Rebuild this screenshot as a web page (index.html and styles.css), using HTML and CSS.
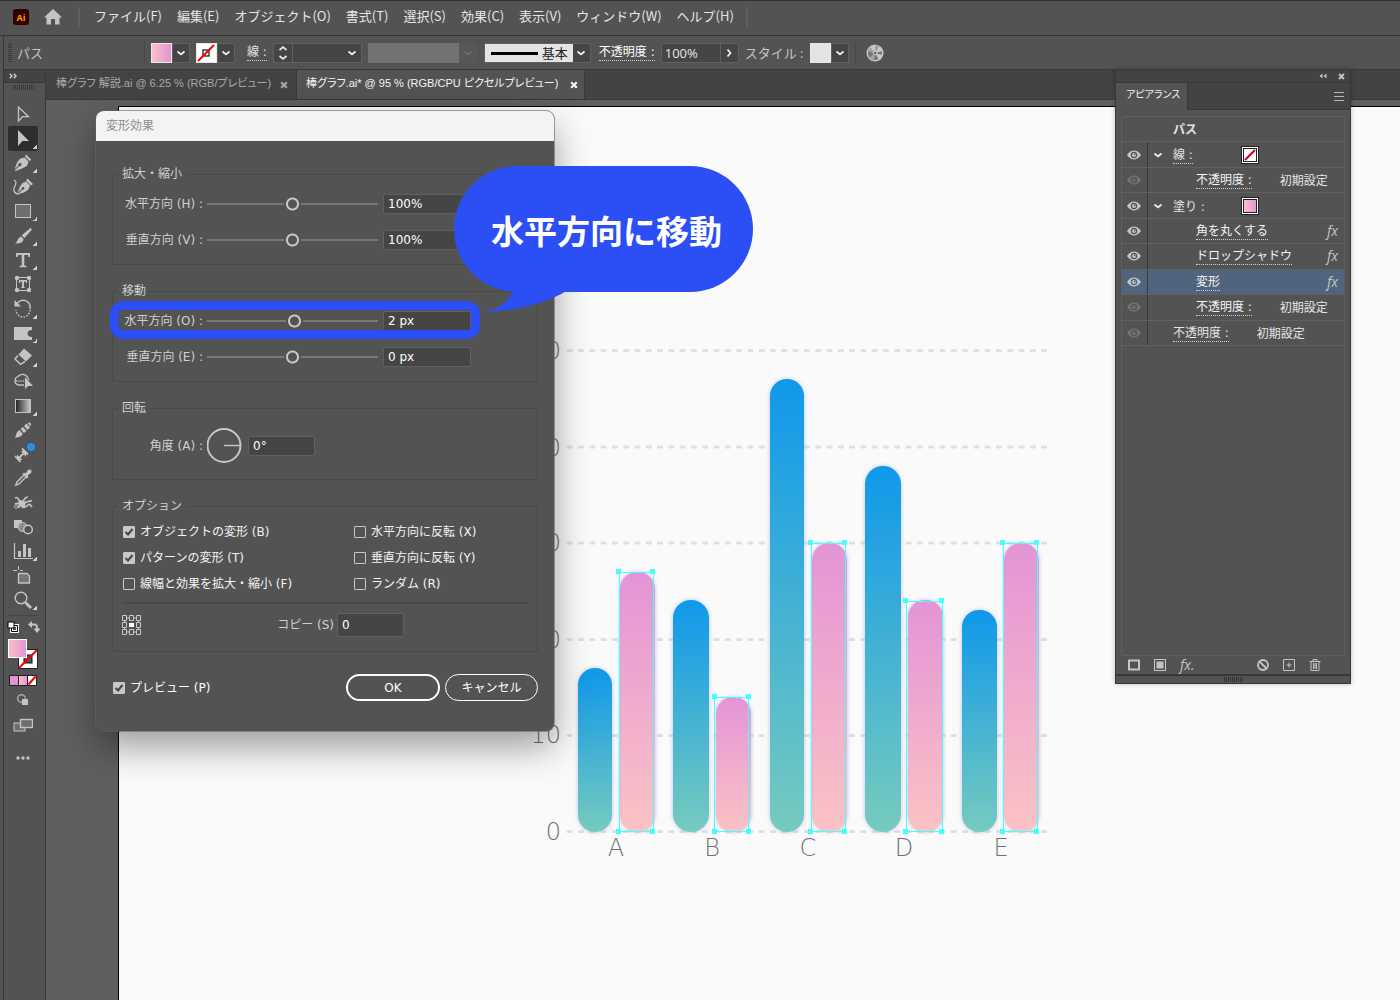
FILE: index.html
```html
<!DOCTYPE html>
<html lang="ja">
<head>
<meta charset="utf-8">
<title>棒グラフ.ai</title>
<link rel="stylesheet" href="styles.css">
</head>
<body>
<svg class="defs" aria-hidden="true">
  <symbol id="eye" viewBox="0 0 14 10"><path fill="currentColor" fill-rule="evenodd" d="M0 5C2 2 4.500 .6 7 .6S12 2 14 5C12 8 9.500 9.400 7 9.400S2 8 0 5ZM7 1.800A3.200 3.200 0 1 0 7 8.200A3.200 3.200 0 1 0 7 1.800Z"/><circle cx="7" cy="5" r="2" fill="currentColor"/><circle cx="7.600" cy="4.400" r=".8" fill="#535353"/></symbol>
  <symbol id="chev" viewBox="0 0 10 10"><path d="M1.500 3.500 5 6.500 8.500 3.500" fill="none" stroke="currentColor" stroke-width="1.700"/></symbol>
  <symbol id="close" viewBox="0 0 8 8"><path d="M1.200 1.200 6.800 6.800M6.800 1.200 1.200 6.800" stroke="currentColor" stroke-width="2.200"/></symbol>
  <symbol id="pen" viewBox="0 0 20 20"><path fill="currentColor" fill-rule="evenodd" d="M11.500 4.500 15.500 8.500 14 13 8 16 2.500 18 1.800 17.400 6.200 13A1.600 1.600 0 1 0 5.500 12.200L1.500 16.600 4 9.500 7 5.800ZM13 1.500 18.300 6.800 16.500 8 12 3.500Z"/></symbol>
</svg>

<div class="app">
  <nav class="menubar">
    <svg class="logo" viewBox="0 0 16 16" width="16" height="16"><rect width="16" height="16" rx="3" fill="#330000"/><text x="8" y="12" text-anchor="middle" class="logo-text">Ai</text></svg>
    <svg class="home" viewBox="0 0 20 18" width="20" height="18"><path fill="#c4c4c4" d="M10 1 19 9.500H16.500V16.500H12V11H8V16.500H3.500V9.500H1Z"/></svg>
    <span class="bar-sep"></span>
    <a href="#">ファイル(F)</a><a href="#">編集(E)</a><a href="#">オブジェクト(O)</a><a href="#">書式(T)</a><a href="#">選択(S)</a><a href="#">効果(C)</a><a href="#">表示(V)</a><a href="#">ウィンドウ(W)</a><a href="#">ヘルプ(H)</a>
    <span class="bar-sep"></span>
  </nav>

  <div class="controls">
    <span class="grip-v"></span>
    <span class="ctl-kind">パス</span>
    <span class="ctl-sep"></span>
    <button class="swatch-btn" aria-label="塗り"><span class="sw sw-pink"></span><span class="arrow"><svg width="10" height="10"><use href="#chev"/></svg></span></button>
    <button class="swatch-btn" aria-label="線"><span class="sw sw-none"><svg viewBox="0 0 18 18" width="18" height="18"><rect x="6" y="6" width="6" height="6" fill="none" stroke="#222" stroke-width="1.300"/><path d="M1 17 17 1" stroke="#f00008" stroke-width="2"/></svg></span><span class="arrow"><svg width="10" height="10"><use href="#chev"/></svg></span></button>
    <label class="dotted ctl-label" for="weight">線 :</label>
    <span class="combo weight">
      <button class="spin" aria-label="増減"><svg viewBox="0 0 10 16" width="10" height="16"><path d="M1.500 5 5 2 8.500 5M1.500 11 5 14 8.500 11" fill="none" stroke="#e6e6e6" stroke-width="1.700"/></svg></button>
      <select id="weight"><option></option></select>
    </span>
    <select class="profile" disabled aria-label="可変線幅"><option></option></select>
    <select class="brush" aria-label="ブラシ"><option>基本</option></select>
    <label class="dotted ctl-label bright" for="opacity">不透明度 :</label>
    <span class="combo"><input id="opacity" class="opacity" value="100%"><button class="arrow" aria-label="不透明度"><svg class="turn" width="10" height="10"><use href="#chev"/></svg></button></span>
    <span class="ctl-style">スタイル :</span>
    <button class="swatch-btn" aria-label="スタイル"><span class="sw sw-style"></span><span class="arrow"><svg width="10" height="10"><use href="#chev"/></svg></span></button>
    <span class="ctl-sep"></span>
    <svg class="recolor" viewBox="0 0 18 18" width="18" height="18"><circle cx="9" cy="9" r="7.800" fill="#777" stroke="#c8c8c8" stroke-width="1.500"/><path d="M9 9 4 3A8 8 0 0 1 9 1ZM9 9 13 2.500A8 8 0 0 1 16.500 7ZM9 9 16.500 11A8 8 0 0 1 13 15.500Z" fill="#c8c8c8"/><path d="M9 9 1.500 7A8 8 0 0 1 4 3ZM9 9 8 17A8 8 0 0 1 3 14ZM9 9 9 1A8 8 0 0 1 13 2.500Z" fill="#a4a4a4"/><circle cx="9" cy="9" r="1.800" fill="#666" stroke="#c8c8c8"/></svg>
  </div>

  <div class="work">
    <aside class="toolbar">
      <div class="tool-head"><svg viewBox="0 0 8 6" width="8" height="6"><path d="M.8 .8 3 3 .8 5.200M4.800 .8 7 3 4.800 5.200" fill="none" stroke="#d0d0d0" stroke-width="1.400"/></svg></div>
      <div class="grip-h"></div>
      <div class="tools">
        <button aria-label="選択"><svg viewBox="0 0 20 20"><path d="M5.500 3V17L9.500 12.700H15.500Z" fill="none" stroke="currentColor" stroke-width="1.300"/></svg></button>
        <button class="on more" aria-label="ダイレクト選択"><svg viewBox="0 0 20 20"><path d="M5 2V18L9.500 13H16Z" fill="currentColor"/></svg></button>
        <button class="more" aria-label="ペン"><svg><use href="#pen"/></svg></button>
        <button aria-label="曲線"><svg viewBox="0 0 20 20"><path fill="currentColor" fill-rule="evenodd" d="M13 4.500 17 8.500 15.500 12.500 11 15.500 5 17 9.500 12.500A1.300 1.300 0 1 0 8.800 11.800L4.500 16 7 9.500 9.500 6ZM14.500 1.500 20 7 18 8.500 13 3.500Z"/><path d="M1 3C4 4 3 7 1.500 10S1 17 6 17" fill="none" stroke="currentColor" stroke-width="1.300"/></svg></button>
        <button class="more" aria-label="長方形"><svg viewBox="0 0 20 20"><rect x="2.500" y="3.500" width="15" height="13" fill="#6e6e6e" stroke="currentColor"/></svg></button>
        <button class="more" aria-label="ブラシ"><svg viewBox="0 0 20 20"><path fill="currentColor" d="M17.500 2 19 3.500 11.500 12 8.500 9.500ZM8 10.500 10.500 13C10 17 6 18 2 17.500 5 16 4 12 8 10.500Z"/></svg></button>
        <button class="more" aria-label="文字"><svg viewBox="0 0 20 20"><path fill="currentColor" d="M3 3H17V7H15.500L15 5H11.300V15.500L13.500 16V17.300H6.500V16L8.700 15.500V5H5L4.500 7H3Z"/></svg></button>
        <button aria-label="文字タッチ"><svg viewBox="0 0 20 20"><rect x="3.500" y="3.500" width="13" height="13" fill="none" stroke="currentColor"/><path fill="currentColor" d="M6 6H14V9H13L12.500 7.500H11V13L12 13.500V14H8V13.500L9 13V7.500H7.500L7 9H6Z"/><g fill="currentColor"><circle cx="4" cy="4" r="2.200"/><circle cx="16" cy="4" r="2.200"/><circle cx="4" cy="16" r="2.200"/><circle cx="16" cy="16" r="2.200"/></g></svg></button>
        <button class="more" aria-label="回転"><svg viewBox="0 0 20 20"><path d="M4 6A7 7 0 0 1 17 11" fill="none" stroke="currentColor" stroke-width="1.500"/><path d="M17 12A7 7 0 0 1 3 12" fill="none" stroke="currentColor" stroke-width="1.500" stroke-dasharray="1.500 1.500"/><path d="M1.500 2V8.500H8Z" fill="currentColor"/></svg></button>
        <button class="more" aria-label="線幅"><svg viewBox="0 0 20 20"><path fill="currentColor" d="M1 4H19V7C13 7 13 14 19 14V17H1Z"/></svg></button>
        <button class="more" aria-label="消しゴム"><svg viewBox="0 0 20 20"><path fill="currentColor" d="M11 1.500 19 8.500 13 14.500 5.500 7.500Z"/><path d="M5 8.500 2 12 7.500 17.300 12 14.500" fill="none" stroke="currentColor" stroke-width="1.500"/></svg></button>
        <button aria-label="シェイプ形成"><svg viewBox="0 0 20 20"><path d="M11 14H5A4.500 4.500 0 0 1 5 5.500 6 6 0 0 1 14 5.500L16 9" fill="none" stroke="currentColor" stroke-width="1.300"/><path d="M3 10H12" stroke="currentColor" stroke-width="1.400" stroke-dasharray="1.200 1"/><path d="M12 6V18L15 15H20Z" fill="currentColor"/></svg></button>
        <button class="more" aria-label="グラデーション"><svg viewBox="0 0 20 20"><defs><linearGradient id="gt"><stop stop-color="#222"/><stop offset="1" stop-color="#ccc"/></linearGradient></defs><rect x="2.500" y="3.500" width="15" height="13" fill="url(#gt)" stroke="currentColor"/></svg></button>
        <button aria-label="メッシュ"><svg viewBox="0 0 20 20"><path fill="currentColor" d="M2 18 4 12 6.500 10 10 14 7.500 16.500ZM7.500 9 10 7 13.500 11 11 13ZM11 6 13.500 3.500 17 7.500 14.500 10ZM14.500 3 17 2.500 18 4 17.500 6.500Z"/></svg></button>
        <button class="dot" aria-label="寸法"><svg viewBox="0 0 20 20"><path d="M2 12 7.500 18M9 4.500 15 10.500M5 15 12 8" stroke="currentColor" stroke-width="1.800"/><path d="M4 16V10.500L9.500 16ZM13 7V13L8 7Z" fill="currentColor"/></svg></button>
        <button aria-label="スポイト"><svg viewBox="0 0 20 20"><path d="M11.500 6.500 4 14 2.800 17.200 6 16 13.500 8.500" fill="none" stroke="currentColor" stroke-width="1.400"/><path fill="currentColor" d="M9.500 6 11 4.500 12.500 5.500 15 2C18 .5 19.500 3 18 5L14.500 7.500 15.500 9 14 10.500Z"/></svg></button>
        <button aria-label="パペットワープ"><svg viewBox="0 0 20 20"><path d="M2 5C4 4 5 5 6 7S9 9 11 7 12 4 15 4M2 11C6 9 8 12 5 15M8 12C10 16 13 14 15 12S18 13 19 14M12 9C14 10 16 7 19 8" fill="none" stroke="currentColor" stroke-width="1.700"/><path d="M5 7 10 8 13 9 12 14 8 14 6 11Z" fill="currentColor"/><circle cx="3" cy="13.500" r="1.600" fill="none" stroke="currentColor"/></svg></button>
        <button aria-label="ブレンド"><svg viewBox="0 0 20 20"><rect x="1" y="3" width="8" height="8" fill="currentColor"/><circle cx="9.500" cy="10" r="4.500" fill="#8d8d8d" stroke="currentColor"/><circle cx="15" cy="12.500" r="4.300" fill="#535353" stroke="currentColor" stroke-width="1.500"/></svg></button>
        <button class="more" aria-label="グラフ"><svg viewBox="0 0 20 20"><path d="M1.500 2V17.500H20" fill="none" stroke="currentColor" stroke-width="1.200"/><path fill="currentColor" d="M5 10H8V16H5ZM10 3H13V16H10ZM15 7H18V16H15Z"/></svg></button>
        <button aria-label="アートボード"><svg viewBox="0 0 20 20"><path d="M5.500 7.500H14L16.500 10V17H5.500Z" fill="#757575" stroke="currentColor" stroke-width="1.300"/><path d="M0 4.500H4M5.500 0V4M7 4.500H10" stroke="currentColor"/></svg></button>
        <button class="more" aria-label="ズーム"><svg viewBox="0 0 20 20"><circle cx="8" cy="8" r="5.800" fill="none" stroke="currentColor" stroke-width="1.400"/><path d="M12.500 12.500 18 18" stroke="currentColor" stroke-width="2.800"/></svg></button>
      </div>
      <div class="tool-div"></div>
      <div class="mini">
        <svg viewBox="0 0 12 12" width="12" height="12"><path d="M4.500 4.500H10.500V10.500H4.500Z" fill="none" stroke="#fff" stroke-width="3"/><path d="M4.500 4.500H10.500V10.500H4.500Z" fill="none" stroke="#000"/><path d="M1 1H7V7H1Z" fill="#fff" stroke="#000"/></svg>
        <svg viewBox="0 0 12 12" width="12" height="12"><path d="M3 3.500H7Q9 3.500 9 8" fill="none" stroke="#c4c4c4" stroke-width="2"/><path d="M0 3.500 4 0V7ZM5.500 7.500H12.500L9 12Z" fill="#c4c4c4"/></svg>
      </div>
      <svg class="fillstroke" viewBox="0 0 30 30" width="30" height="30"><defs><linearGradient id="pk"><stop stop-color="#fbc0c5"/><stop offset="1" stop-color="#e394d6"/></linearGradient></defs><rect x="10.500" y="10.500" width="19" height="19" fill="#fff" stroke="#222"/><rect x="16" y="16" width="8" height="8" fill="#535353" stroke="#111"/><path d="M11 29 29 11" stroke="#f00008" stroke-width="2"/><rect x=".5" y=".5" width="18" height="18" fill="url(#pk)" stroke="#fff"/></svg>
      <svg class="modes" viewBox="0 0 28 11" width="28" height="11"><rect width="28" height="11" fill="#222"/><rect x="1" y="1" width="8" height="9" fill="#e394d6"/><rect x="10" y="1" width="8" height="9" fill="url(#pk)"/><rect x="19" y="1" width="8" height="9" fill="#fff"/><path d="M19.500 9.500 26.500 1.500" stroke="#f00008" stroke-width="2"/></svg>
      <svg class="drawmode" viewBox="0 0 12 12" width="12" height="12"><circle cx="4.500" cy="4.500" r="3.800" fill="none" stroke="#a8a8a8" stroke-width="1.400"/><rect x="5" y="5" width="6" height="6" fill="#c4c4c4"/></svg>
      <svg class="screen" viewBox="0 0 20 14" width="20" height="14"><rect x="1" y="5" width="11" height="8" fill="#6e6e6e" stroke="#c4c4c4"/><rect x="7.500" y="1.500" width="12" height="8" fill="#6e6e6e" stroke="#c4c4c4" stroke-width="1.400"/></svg>
      <svg class="dots" viewBox="0 0 14 4" width="14" height="4"><g fill="#c4c4c4"><circle cx="2" cy="2" r="1.700"/><circle cx="7" cy="2" r="1.700"/><circle cx="12" cy="2" r="1.700"/></g></svg>
    </aside>

    <main class="doc">
      <div class="tabs">
        <div class="tab"><span>棒グラフ 解説.ai @ 6.25 % (RGB/プレビュー)</span><button aria-label="閉じる"><svg width="8" height="8"><use href="#close"/></svg></button></div>
        <div class="tab active"><span>棒グラフ.ai* @ 95 % (RGB/CPU ピクセルプレビュー)</span><button aria-label="閉じる"><svg width="8" height="8"><use href="#close"/></svg></button></div>
      </div>
      <div class="canvas">
        <div class="artboard">
          <svg class="chart" viewBox="520 330 540 540" width="540" height="540">
            <defs>
              <linearGradient id="blue" x2="0" y2="1"><stop stop-color="#0f98ea"/><stop offset="1" stop-color="#76cbbe"/></linearGradient>
              <linearGradient id="pink" x2="0" y2="1"><stop stop-color="#e394d6"/><stop offset="1" stop-color="#fcc2c4"/></linearGradient>
            </defs>
            <g class="grid">
              <path pathLength="424" d="M568 350.500H1047"/><path pathLength="424" d="M568 447H1047"/><path pathLength="424" d="M568 543H1047"/><path pathLength="424" d="M568 639.500H1047"/><path pathLength="424" d="M568 735.500H1047"/><path pathLength="424" d="M568 831.500H1047"/>
            </g>
            <g class="axis" text-anchor="end">
              <text x="561" y="359">50</text><text x="561" y="456">40</text><text x="561" y="551">30</text><text x="561" y="648">20</text><text x="561" y="743">10</text><text x="561" y="840">0</text>
            </g>
            <g class="axis" text-anchor="middle">
              <text x="616" y="856">A</text><text x="712" y="856">B</text><text x="808" y="856">C</text><text x="904" y="856">D</text><text x="1001" y="856">E</text>
            </g>
            <g class="bars" fill="url(#blue)">
              <rect x="578" y="668" width="34" height="164" rx="17"/><rect x="673" y="600" width="36" height="232" rx="18"/><rect x="770" y="379" width="34" height="453" rx="17"/><rect x="865" y="466" width="36" height="366" rx="18"/><rect x="962" y="610" width="35" height="222" rx="17"/>
            </g>
            <g class="bars" fill="url(#pink)">
              <rect x="620" y="572" width="35" height="260" rx="17"/><rect x="716" y="697" width="35" height="135" rx="17"/><rect x="812" y="543" width="35" height="289" rx="17"/><rect x="908" y="600" width="35" height="232" rx="17"/><rect x="1004" y="543" width="35" height="289" rx="17"/>
            </g>
            <g class="sel">
              <path d="M619.500 572.500H653.500V831.500H619.500Z"/><path d="M714.500 697.500H748.500V831.500H714.500Z"/><path d="M811.500 543.500H845.500V831.500H811.500Z"/><path d="M906.500 601.500H942.500V831.500H906.500Z"/><path d="M1003.500 543.500H1037.500V831.500H1003.500Z"/>
            </g>
            <path class="handles" d="M616 569h5v5h-5zM650 569h5v5h-5zM616 829h5v5h-5zM650 829h5v5h-5zM712 694h5v5h-5zM746 694h5v5h-5zM712 829h5v5h-5zM746 829h5v5h-5zM808 540h5v5h-5zM842 540h5v5h-5zM808 829h5v5h-5zM842 829h5v5h-5zM903 598h5v5h-5zM939 598h5v5h-5zM903 829h5v5h-5zM939 829h5v5h-5zM1000 540h5v5h-5zM1034 540h5v5h-5zM1000 829h5v5h-5zM1034 829h5v5h-5z"/>
          </svg>
        </div>
      </div>
    </main>
  </div>

  <form class="dialog">
    <h2>変形効果</h2>
    <div class="dialog-body">
      <fieldset><legend>拡大・縮小</legend>
        <div class="row"><label for="sh">水平方向 (H) :</label><input id="sh" type="range" value="50"><input class="num" aria-label="水平方向" value="100%"></div>
        <div class="row"><label for="sv">垂直方向 (V) :</label><input id="sv" type="range" value="50"><input class="num" aria-label="垂直方向" value="100%"></div>
      </fieldset>
      <fieldset><legend>移動</legend>
        <div class="row"><label for="mo">水平方向 (O) :</label><input id="mo" type="range" value="51"><input class="num" aria-label="水平方向" value="2 px"></div>
        <div class="row"><label for="me">垂直方向 (E) :</label><input id="me" type="range" value="50"><input class="num" aria-label="垂直方向" value="0 px"></div>
      </fieldset>
      <fieldset class="rotate"><legend>回転</legend>
        <div class="row"><label for="ang">角度 (A) :</label><svg viewBox="0 0 36 36" width="36" height="36"><circle cx="17" cy="17.500" r="16.500" fill="none" stroke="#c8c8c8" stroke-width="2"/><path d="M17 17.500H33" stroke="#c8c8c8" stroke-width="1.400"/></svg><input id="ang" class="num short" value="0°"></div>
      </fieldset>
      <fieldset class="options"><legend>オプション</legend>
        <div class="checks">
          <label><input type="checkbox" checked>オブジェクトの変形 (B)</label><label><input type="checkbox">水平方向に反転 (X)</label>
          <label><input type="checkbox" checked>パターンの変形 (T)</label><label><input type="checkbox">垂直方向に反転 (Y)</label>
          <label><input type="checkbox">線幅と効果を拡大・縮小 (F)</label><label><input type="checkbox">ランダム (R)</label>
        </div>
        <div class="copy">
          <svg viewBox="0 0 19 20" width="19" height="20"><path d="M.5 .5h4v5h-4zM7.500 .5h4v5h-4zM14.500 .5h4v5h-4zM.5 7.500h4v5h-4zM14.500 7.500h4v5h-4zM.5 14.500h4v5h-4zM7.500 14.500h4v5h-4zM14.500 14.500h4v5h-4zM4.500 3h3M11.500 3h3M4.500 17h3M11.500 17h3M2.500 5.500v2M16.500 5.500v2M2.500 12.500v2M16.500 12.500v2" fill="none" stroke="#c8c8c8"/><rect x="7" y="8" width="5" height="4" fill="#fff"/></svg>
          <label for="cp">コピー (S)</label><input id="cp" class="num short" value="0">
        </div>
      </fieldset>
      <div class="actions"><label class="check"><input type="checkbox" checked>プレビュー (P)</label><button type="button" class="ok">OK</button><button type="button">キャンセル</button></div>
    </div>
  </form>

  <aside class="panel">
    <div class="panel-top"><svg viewBox="0 0 8 6" width="8" height="6"><path d="M3.500 .5V5.500L.5 3ZM7.500 .5V5.500L4.500 3Z" fill="#c4c4c4"/></svg><svg width="7" height="7"><use href="#close"/></svg></div>
    <div class="panel-tabs"><span class="panel-tab">アピアランス</span><svg viewBox="0 0 10 9" width="10" height="9"><path d="M0 .5H10M0 4.500H10M0 8.500H10" stroke="#b4b4b4"/></svg></div>
    <div class="panel-body">
      <div class="list">
        <div class="rows">
          <div class="item"><span></span><b class="lv1">パス</b></div>
          <div class="item"><span class="eye"><svg><use href="#eye"/></svg></span><svg class="tw"><use href="#chev"/></svg><span class="lv1 dotted">線 :</span><span class="chip"><svg viewBox="0 0 12 12" width="12" height="12"><rect width="12" height="12" fill="#fff"/><path d="M1 11 11 1" stroke="#d0021b" stroke-width="2.200"/></svg></span></div>
          <div class="item"><span class="eye dim"><svg><use href="#eye"/></svg></span><span class="lv2 dotted">不透明度 :</span><span class="val">初期設定</span></div>
          <div class="item"><span class="eye"><svg><use href="#eye"/></svg></span><svg class="tw"><use href="#chev"/></svg><span class="lv1">塗り :</span><span class="chip"><span class="grad"></span></span></div>
          <div class="item"><span class="eye"><svg><use href="#eye"/></svg></span><span class="lv2 dotted">角を丸くする</span><i class="fx">fx</i></div>
          <div class="item"><span class="eye"><svg><use href="#eye"/></svg></span><span class="lv2 dotted">ドロップシャドウ</span><i class="fx">fx</i></div>
          <div class="item picked"><span class="eye"><svg><use href="#eye"/></svg></span><span class="lv2 dotted">変形</span><i class="fx">fx</i></div>
          <div class="item"><span class="eye dim"><svg><use href="#eye"/></svg></span><span class="lv2 dotted">不透明度 :</span><span class="val">初期設定</span></div>
          <div class="item"><span class="eye dim"><svg><use href="#eye"/></svg></span><span class="lv1 dotted">不透明度 :</span><span class="val">初期設定</span></div>
        </div>
      </div>
      <div class="panel-foot">
        <button aria-label="新規線"><svg viewBox="0 0 12 12" width="12" height="12"><rect x="1" y="1.500" width="10" height="9" fill="none" stroke="#c4c4c4" stroke-width="2"/></svg></button>
        <button aria-label="新規塗り"><svg viewBox="0 0 12 12" width="12" height="12"><rect x=".5" y=".5" width="11" height="11" fill="none" stroke="#c4c4c4"/><rect x="2.500" y="2.500" width="7" height="7" fill="#c4c4c4"/></svg></button>
        <button class="fx-btn" aria-label="効果"><i class="fx">fx.</i></button>
        <button aria-label="消去"><svg viewBox="0 0 12 12" width="12" height="12"><circle cx="6" cy="6" r="5" fill="none" stroke="#c4c4c4" stroke-width="1.800"/><path d="M2.500 2.500 9.500 9.500" stroke="#c4c4c4" stroke-width="1.800"/></svg></button>
        <button aria-label="複製"><svg viewBox="0 0 12 12" width="12" height="12"><path d="M.5 .5H11.500V11.500H.5ZM6 3.500V8.500M3.500 6H8.500" fill="none" stroke="#c4c4c4"/></svg></button>
        <button aria-label="削除"><svg viewBox="0 0 12 12" width="12" height="12"><path d="M.5 2.500H11.500M4 2V.5H8V2M2 3V11.500H10V3M4.500 4V10M6 4V10M7.500 4V10" fill="none" stroke="#c4c4c4"/></svg></button>
      </div>
    </div>
    <div class="panel-grip"><span></span></div>
  </aside>

  <div class="ring"></div>
  <div class="callout">
    <span>水平方向に移動</span>
    <svg viewBox="0 0 84 24" width="84" height="24"><path d="M30 0C24 12 14 20 0 22 32 21 62 14 84 0Z" fill="#2b4ff5"/></svg>
  </div>
</div>
</body>
</html>
```
FILE: styles.css
```css
* { box-sizing: border-box; }
body {
  margin: 0;
  background: #535353;
  color: #e6e6e6;
  font: 13px/16px "Open Sans", "Noto Sans CJK JP", sans-serif;
}
button, input, select { font: inherit; color: inherit; margin: 0; padding: 0; border: 0; background: none; border-radius: 0; }
a { color: inherit; text-decoration: none; }
svg { display: block; flex: none; }
.defs { position: absolute; width: 0; height: 0; }

.app { position: relative; display: flex; flex-direction: column; height: 100vh; overflow: hidden; white-space: nowrap; }

/* Menu bar */
.menubar { display: flex; align-items: center; gap: 15px; height: 36px; padding: 0 0 2px 13px; border-top: 1px solid #333; border-bottom: 1px solid #383838; font-family: "Noto Sans CJK JP", sans-serif; }
.menubar a { line-height: 20px; padding-bottom: 3px; }
.logo-text { font: bold 9px "Open Sans", sans-serif; fill: #ff9a00; }
.home { margin-left: -1px; }
.bar-sep { width: 2px; height: 20px; margin-right: -1px; background: #606060; }
.menubar .bar-sep:last-child { margin-left: -3px; }

/* Control bar */
.controls { display: flex; align-items: center; height: 34px; margin-left: 3px; border-left: 1px solid #383838; border-bottom: 1px solid #383838; }
.grip-v { width: 4px; height: 20px; margin-left: 4px; background: repeating-linear-gradient(#3c3c3c 0 1px, transparent 1px 2px); }
.ctl-kind { width: 132px; padding-left: 5px; color: #c4c4c4; }
.ctl-sep { width: 1px; height: 24px; margin-right: 6px; background: #484848; }
.swatch-btn { display: flex; margin-right: 6px; }
.sw { width: 21px; height: 20px; border: 1px solid #e8e8e8; }
.sw-pink { background: linear-gradient(90deg, #fbc0c5, #e394d6); }
.sw-none { background: #fff; }
.sw-style { background: #e4e4e4; }
.arrow { display: grid; place-items: center; width: 18px; height: 20px; background: #454545; border: 1px solid #606060; color: #f0f0f0; }
.turn { transform: rotate(-90deg); }
.dotted { border-bottom: 1px dotted #d0d0d0; line-height: 15px; }
.ctl-label { margin: 0 6px; font: 12px/15px "DejaVu Sans", "Noto Sans CJK JP", sans-serif; }
.bright { color: #fff; margin-left: 8px; }
.combo { display: flex; border: 1px solid #606060; background: #454545; height: 20px; }
.combo .arrow { border-width: 0 0 0 1px; height: 18px; }
.spin { display: grid; place-items: center; width: 18px; }
select { appearance: none; height: 20px; background: #454545 url("data:image/svg+xml,%3Csvg xmlns='http://www.w3.org/2000/svg' width='10' height='10'%3E%3Cpath d='M1.500 3.500 5 6.500 8.500 3.500' fill='none' stroke='%23f0f0f0' stroke-width='1.700'/%3E%3C/svg%3E") no-repeat right 4px center; }
.weight select { width: 69px; height: 18px; border-left: 1px solid #606060; }
.profile { width: 109px; margin: 0 7px 0 6px; background-color: #5a5a5a; background-image: url("data:image/svg+xml,%3Csvg xmlns='http://www.w3.org/2000/svg' width='10' height='10'%3E%3Cpath d='M1.500 3.500 5 6.500 8.500 3.500' fill='none' stroke='%23757575' stroke-width='1.700'/%3E%3C/svg%3E"), linear-gradient(#808080, #808080); background-position: right 4px center, 0 0; background-size: 10px 10px, 91px 20px; }
.brush { width: 107px; padding-left: 57px; border: 1px solid #606060; color: #222; background-image: url("data:image/svg+xml,%3Csvg xmlns='http://www.w3.org/2000/svg' width='10' height='10'%3E%3Cpath d='M1.500 3.500 5 6.500 8.500 3.500' fill='none' stroke='%23f0f0f0' stroke-width='1.700'/%3E%3C/svg%3E"), linear-gradient(#000, #000), linear-gradient(#e4e4e4, #e4e4e4); background-position: right 4px center, 6px 8px, 0 0; background-size: 10px 10px, 47px 3px, 88px 20px; }
.opacity { width: 58px; padding-left: 3px; }
.ctl-style { width: 65px; margin-left: 6px; color: #c4c4c4; }
.recolor { margin-left: 4px; }

/* Toolbar */
.work { display: flex; flex: 1; min-height: 0; }
.toolbar { display: flex; flex-direction: column; align-items: center; width: 43px; margin-left: 3px; padding-right: 3px; border-left: 1px solid #383838; border-right: 1px solid #383838; }
.tool-head { align-self: stretch; height: 13px; margin-right: -3px; padding: 3px 0 0 5px; background: #434343; border-bottom: 1px solid #383838; }
.grip-h { width: 21px; height: 5px; margin: 2px 0 12px; background: repeating-linear-gradient(90deg, #3a3a3a 0 1px, transparent 1px 2px); }
.tools { display: grid; grid-auto-rows: 1fr; height: 510px; }
.tools button { position: relative; display: grid; place-items: center; width: 30px; color: #c4c4c4; border-radius: 2px; }
.tools svg { width: 20px; height: 20px; }
.tools .on { background: #2e2e2e; }
.more::after { content: ""; position: absolute; right: 1px; bottom: 2px; width: 4px; height: 4px; background: linear-gradient(135deg, transparent 50%, #d0d0d0 50%); }
.dot::after { content: ""; position: absolute; right: 3px; top: 1px; width: 8px; height: 8px; border-radius: 50%; background: #2d8ceb; }
.tool-div { width: 31px; height: 1px; margin: 3px 0 5px; background: #444; }
.mini { display: flex; gap: 9px; margin-bottom: 6px; }
.modes { margin: 6px 0 8px; }
.screen { margin: 12px 0 24px; }

/* Document window */
.doc { display: flex; flex: 1; flex-direction: column; min-width: 0; }
.tabs { display: flex; height: 30px; background: #434343; border-bottom: 1px solid #383838; font: 11px/14px "Liberation Sans", "Noto Sans CJK JP", sans-serif; font-feature-settings: "palt"; }
.tab { display: flex; align-items: center; justify-content: space-between; width: 251px; padding: 0 8px 3px 10px; color: #a8a8a8; border-right: 1px solid #383838; }
.tab button { padding-top: 3px; }
.tab.active { width: 288px; padding: 0 6px 3px 9px; background: #535353; color: #f4f4f4; }
.canvas { display: flex; flex: 1; padding: 6px 0 0 72px; background: #5f5f5f; min-height: 0; }
.artboard { position: relative; flex: 1; background: #fafafa; border: solid #000; border-width: 1px 0 0 1px; overflow: hidden; }
.chart { position: absolute; left: 401px; top: 223px; }
.grid { fill: none; stroke: #e0e0e0; stroke-width: 3; stroke-linecap: round; stroke-dasharray: 3 7; }
.axis { font: 200 24px "DejaVu Sans Light", "DejaVu Sans", sans-serif; fill: #6d7077; }
.bars { filter: drop-shadow(0 0 2px rgba(90, 120, 220, .4)); }
.sel { fill: none; stroke: #4ff; }
.handles { fill: #4ff; }

/* Transform dialog */
.dialog { position: absolute; left: 96px; top: 111px; width: 458px; border-radius: 8px; background: #535353; box-shadow: 0 0 0 1px rgba(100, 100, 100, .6), 0 16px 36px rgba(0, 0, 0, .38); font: 12px/16px "DejaVu Sans", "Noto Sans CJK JP", sans-serif; color: #d0d0d0; overflow: hidden; }
.dialog h2 { margin: 0; height: 30px; padding: 0 10px; background: #f3f3f3; color: #8c8c8c; font-size: 12px; line-height: 30px; font-weight: 400; }
.dialog-body { display: flex; flex-direction: column; gap: 17px; padding: 24px 16px 30px; }
fieldset { margin: 0; padding: 3px 0 6px; border: 1px solid #494949; border-radius: 2px; min-width: 0; }
legend { margin-left: 5px; padding: 0 4px; line-height: 18px; }
.row { display: flex; align-items: center; height: 36px; }
.row label { width: 90px; margin-right: 4px; text-align: right; }
.rotate { padding: 11px 0 15px; }
.num { width: 88px; height: 20px; margin-left: 5px; padding-left: 4px; border: 1px solid #606060; border-radius: 2px; background: #454545; color: #fff; }
.short { width: 67px; }
input[type="range"] { appearance: none; width: 171px; height: 16px; background: linear-gradient(#787878, #787878) no-repeat center / 100% 2px; }
input[type="range"]::-webkit-slider-thumb { appearance: none; width: 17px; height: 14px; border: 0; background: radial-gradient(circle, #535353 4px, #c8c8c8 5px 6px, #535353 7px); }
.checks { display: grid; grid-template-columns: 231px 1fr; grid-auto-rows: 26px; padding: 1px 0 5px 9px; color: #f4f4f4; }
.checks label, .check { display: flex; align-items: center; gap: 5px; padding-left: 1px; }
input[type="checkbox"] { appearance: none; width: 12px; height: 12px; border: 1px solid #c8c8c8; border-radius: 1px; }
input[type="checkbox"]:checked { background: #c8c8c8 url("data:image/svg+xml,%3Csvg xmlns='http://www.w3.org/2000/svg' width='10' height='10'%3E%3Cpath d='M1.500 5 4 7.500 8.500 2' fill='none' stroke='%23444' stroke-width='2'/%3E%3C/svg%3E") no-repeat center; }
.copy { display: flex; align-items: center; height: 43px; margin: 0 9px; border-top: 2px solid #494949; }
.copy label { width: 193px; text-align: right; }
.copy .num { height: 24px; margin-left: 3px; }
.actions { display: flex; align-items: center; gap: 5px; padding-top: 5px; color: #fff; }
.check { margin-right: auto; }
.actions button { width: 93px; height: 27px; border: 1px solid #fff; border-radius: 14px; }
.actions .ok { width: 94px; border-width: 2px; }

/* Appearance panel */
.panel { position: absolute; top: 69px; right: 49px; width: 236px; display: flex; flex-direction: column; background: #535353; border: 1px solid #383838; box-shadow: 0 0 5px rgba(0, 0, 0, .25); font: 12px/16px "DejaVu Sans", "Noto Sans CJK JP", sans-serif; }
.panel-top { display: flex; justify-content: flex-end; align-items: center; gap: 11px; height: 13px; padding-right: 5px; background: #434343; border-bottom: 1px solid #383838; color: #c4c4c4; }
.panel-tabs { display: flex; align-items: center; justify-content: space-between; height: 27px; padding-right: 6px; background: #434343; border-bottom: 1px solid #383838; }
.panel-tab { height: 27px; width: 72px; padding-left: 10px; line-height: 24px; font-size: 10px; color: #f4f4f4; background: #535353; border-right: 1px solid #383838; font-feature-settings: "palt"; }
.panel-body { padding: 6px 5px 0; }
.list { height: 540px; border: 1px solid #5f5f5f; border-radius: 2px; }
.rows { display: grid; grid-auto-rows: 1fr; height: 229px; }
.item { position: relative; display: flex; align-items: center; border-bottom: 1px solid #606060; padding: 0 6px 0 0; }
.item > :first-child { width: 26px; align-self: stretch; }
.eye { display: grid; place-items: center; padding-right: 2px; border-right: 1px solid #383838; color: #c4c4c4; }
.eye svg { width: 14px; height: 10px; }
.dim { color: #737373; }
.lv1, .lv2, .val { margin-top: 2px; }
.lv1 { margin-left: 25px; }
.lv2 { margin-left: 48px; color: #f4f4f4; }
.tw { width: 10px; height: 10px; margin: 0 -19px 0 5px; color: #f0f0f0; }
.tw + .lv1 { margin-left: 29px; }
.chip { position: absolute; left: 119px; width: 18px; height: 18px; padding: 1px; border: 1px solid #222; background: #222; box-shadow: inset 0 0 0 1px #fff; display: grid; place-items: center; }
.grad { width: 12px; height: 12px; background: linear-gradient(90deg, #fbc0c5, #e394d6); }
.val { margin-left: 28px; }
.fx { margin-left: auto; font: italic 14px/16px "Open Sans", sans-serif; color: #c4c4c4; }
.picked { background: #50657d; }
.panel-foot { display: flex; align-items: center; height: 18px; padding: 0 24px 0 7px; }
.panel-foot button { margin-right: 14px; }
.panel-foot .fx-btn { margin-right: auto; }
.panel-foot button:last-child { margin-right: 0; }
.panel-grip { display: grid; place-items: center; height: 9px; border-top: 2px solid #383838; }
.panel-grip span { width: 19px; height: 5px; background: repeating-linear-gradient(90deg, #333 0 1px, transparent 1px 2px); }

/* Annotations over the screen */
.ring { position: absolute; left: 110px; top: 301px; width: 370px; height: 38px; border: 9px solid #2b4ff5; border-radius: 13px; }
.callout { position: absolute; left: 454px; top: 166px; width: 299px; height: 126px; display: grid; place-items: center; border-radius: 63px; background: #2b4ff5; color: #fff; font: 700 33px/48px "Noto Sans CJK JP", sans-serif; }
.callout span { padding: 2px 0 0 6px; }
.callout svg { position: absolute; left: 30px; top: 124px; }
```
